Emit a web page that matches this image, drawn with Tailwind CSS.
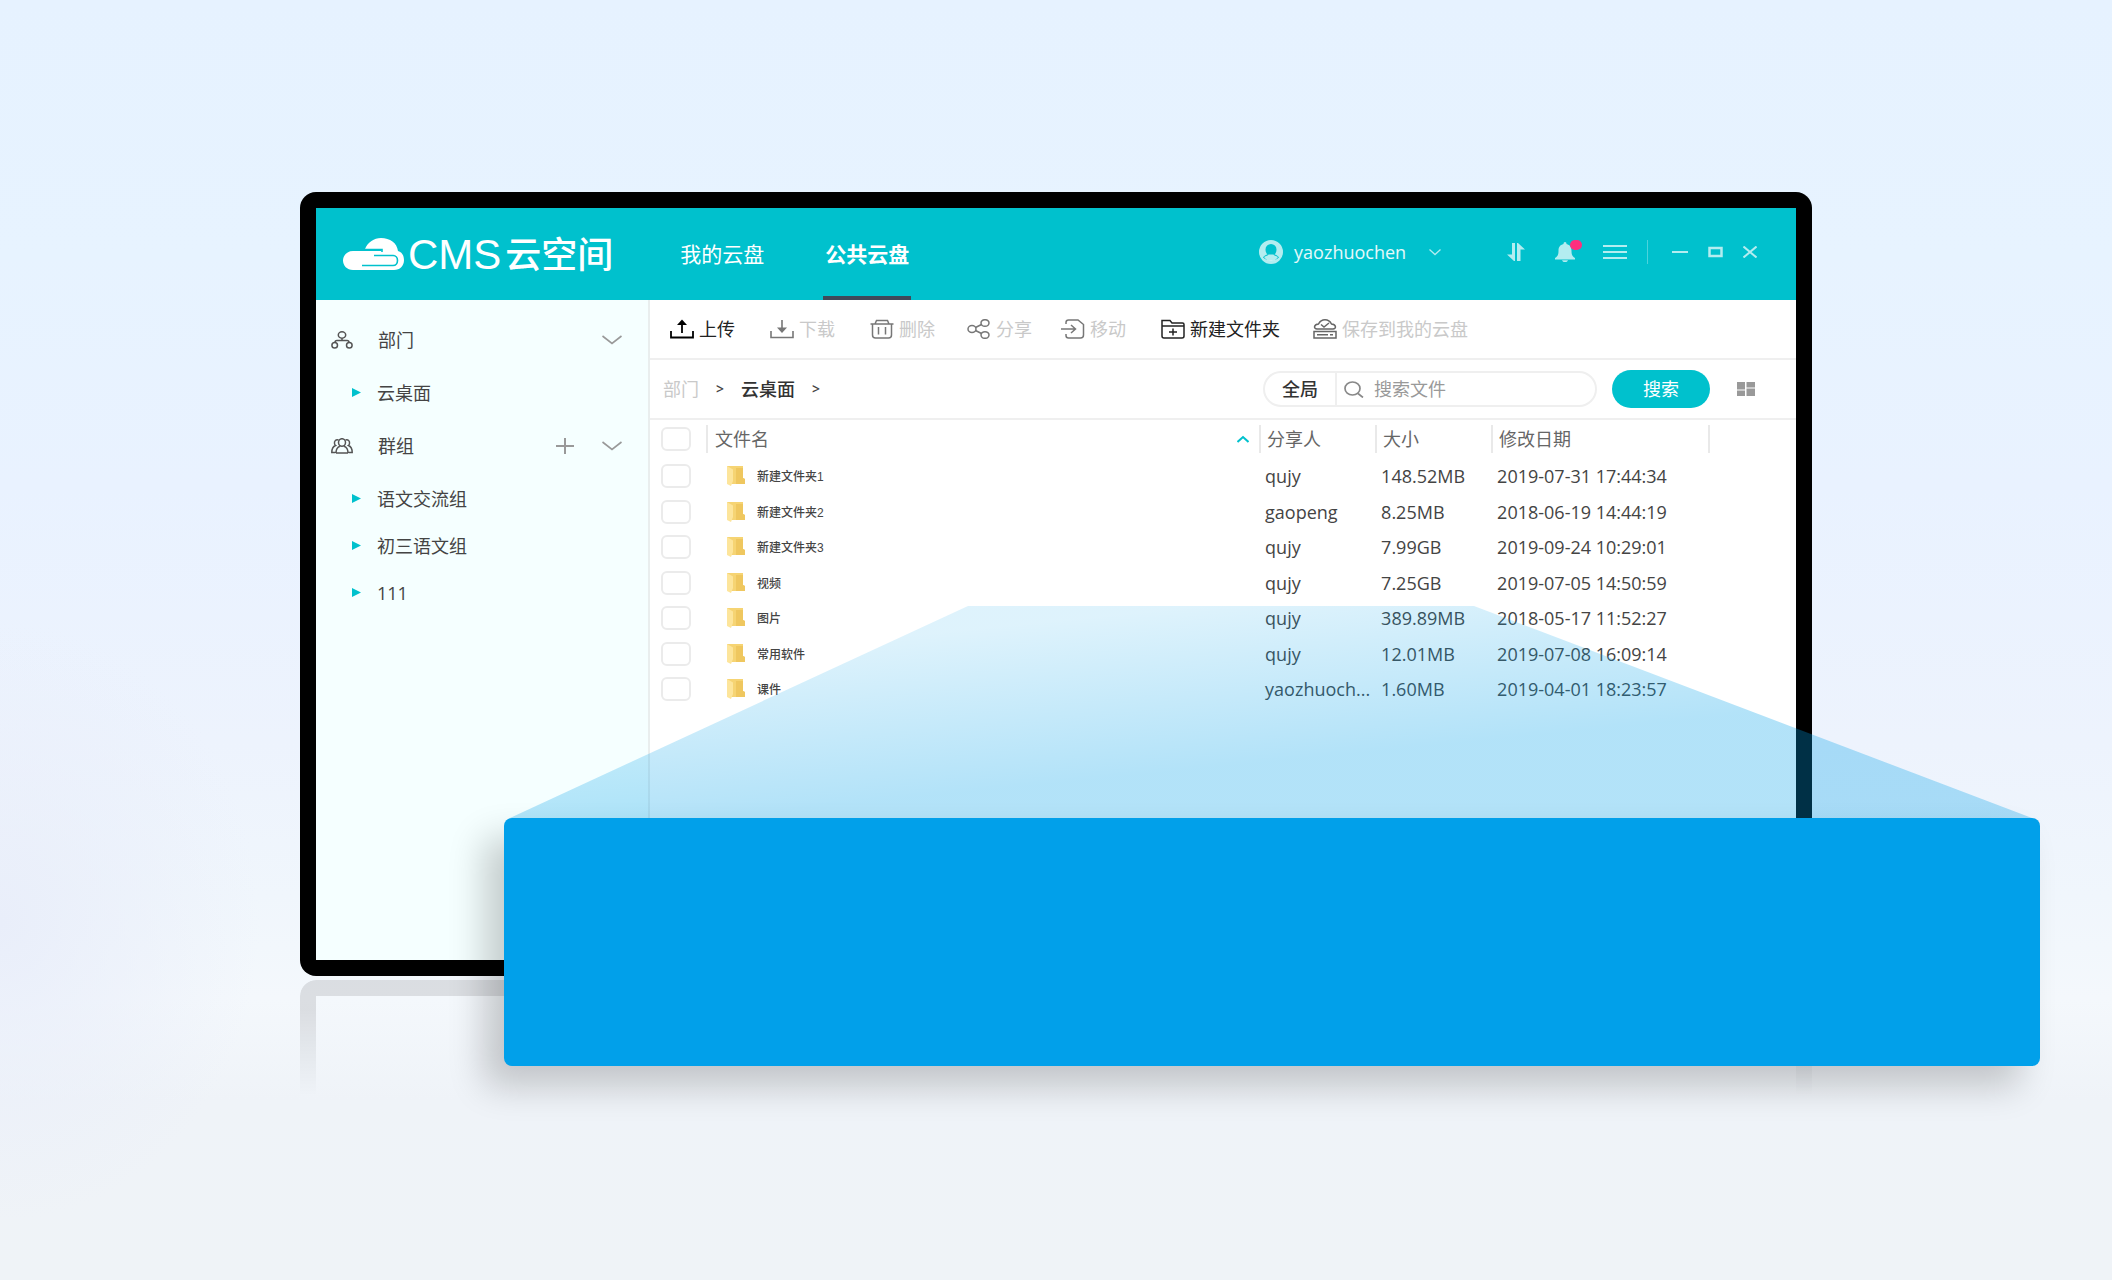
<!DOCTYPE html>
<html lang="zh-CN">
<head>
<meta charset="utf-8">
<title>CMS云空间</title>
<script src="https://cdn.jsdelivr.net/npm/@tailwindcss/browser@4"></script>
</head>
<body class="font-['Open_Sans','Noto_Sans_CJK_SC',sans-serif] text-lg leading-6 text-[#444]">
<main class="relative min-h-screen overflow-hidden bg-[radial-gradient(ellipse_260px_300px_at_0%_72%,#e9eefa_0%,#e9eefa00_100%),linear-gradient(180deg,#e6f2ff_0%,#e7f3ff_20%,#e9f2ff_38%,#edf3fd_58%,#f0f6fc_70%,#f4f8fc_78%,#eff3f8_86%,#eff3f7_100%)] pt-48">

  <!-- monitor -->
  <div class="mx-auto w-[71.6%] rounded-2xl bg-black p-4">
    <div class="flex aspect-[1480/752] flex-col bg-white">

      <header class="flex h-[92px] shrink-0 items-stretch bg-[#00c1cd] pr-[39px] pl-[27px] text-white">
        <a href="#" class="flex items-center gap-1">
          <svg class="h-8 w-[61px]" viewBox="0 0 61 32" aria-hidden="true">
            <path fill="#fff" d="M10 32C4 32 0 27.500 0 22.500S4 13 10 13H38.500V11H22C25 4 31 0 38 0C47 0 54 5 55 13C59 14 61 18 61 22C61 28 57 32 51 32Z"/>
            <path fill="none" stroke="#00c1cd" stroke-width="1.600" d="M22 11.500H39V14M31 17.500H50C56 17.500 56 27.500 50 27.500H19"/>
          </svg>
          <span class="flex items-center gap-1 pt-0.5 text-[36px] leading-10 font-medium whitespace-nowrap"><span class="font-['Liberation_Sans',sans-serif] text-[42px] font-normal">CMS</span>云空间</span>
        </a>
        <nav class="ml-[55px] flex gap-[47px] text-[21px]">
          <a href="#" class="flex items-center border-b-4 border-transparent px-3 pt-1">我的云盘</a>
          <a href="#" class="flex items-center border-b-4 border-[#3f4a5a] px-[2px] pt-1 font-bold">公共云盘</a>
        </nav>
        <div class="ml-auto flex h-[87px] items-center text-white/70">
          <button class="flex items-center gap-[11px] text-white/90">
            <svg class="size-6 text-white/70" viewBox="0 0 24 24" aria-hidden="true"><path fill="currentColor" fill-rule="evenodd" d="M12 0a12 12 0 1 0 0 24a12 12 0 0 0 0-24ZM12 4a5.500 5.500 0 0 1 5.500 5.500c0 2.500-1 4-2 5c2.500 .5 3.500 1.500 4.500 3c-2 2-5 3-8 3s-6-1-8-3c1-1.500 2-2.500 4.500-3c-1-1-2-2.500-2-5A5.500 5.500 0 0 1 12 4Z"/><path fill="currentColor" d="M5 17C7 15.500 9 16 9.500 14.500H14.500C15 16 17 15.500 19 17C17 20 14 21 12 21S7 20 5 17Z"/></svg>
            yaozhuochen
            <svg class="ml-3 h-2 w-3 text-white/70" viewBox="0 0 12 8" fill="none" stroke="currentColor" stroke-width="1.300" aria-hidden="true"><path d="M.5 1.500 6 6.500 11.500 1.500"/></svg>
          </button>
          <button class="ml-[66px]" aria-label="传输"><svg class="h-5 w-[18px]" viewBox="0 0 18 20" fill="currentColor" aria-hidden="true"><path d="M5 1H8V19H7L0 12.500H5ZM10 1H11L18 7.500H13.500V19H10Z"/></svg></button>
          <button class="relative ml-[30px]" aria-label="通知"><svg class="h-5 w-5" viewBox="0 0 20 20" fill="currentColor" aria-hidden="true"><path d="M10 0C11 0 11.500 .8 11.500 2C15 3 16.500 5 16.500 9C16.500 13 17.500 14.500 20 16V17.500H0V16C2.500 14.500 3.500 13 3.500 9C3.500 5 5 3 8.500 2C8.500 .8 9 0 10 0ZM7 18.200H13C12.500 19.500 11.500 20 10 20S7.500 19.500 7 18.200Z"/></svg><span class="absolute -top-0.5 -right-[7px] h-[10px] w-3 rounded-full bg-[#ff2f7e]"></span></button>
          <button class="ml-7" aria-label="菜单"><svg class="h-4 w-6" viewBox="0 0 24 16" stroke="currentColor" stroke-width="2" aria-hidden="true"><path d="M0 2H24M0 8H24M0 14H24"/></svg></button>
          <span class="ml-5 h-6 w-px bg-white/30"></span>
          <button class="ml-6" aria-label="最小化"><svg class="h-3 w-4" viewBox="0 0 16 12" stroke="currentColor" stroke-width="2" aria-hidden="true"><path d="M0 6H16"/></svg></button>
          <button class="ml-5" aria-label="最大化"><svg class="h-3 w-[15px]" viewBox="0 0 15 12" fill="none" stroke="currentColor" stroke-width="2.500" aria-hidden="true"><path d="M1.500 2H13.500V10H1.500Z"/></svg></button>
          <button class="ml-5" aria-label="关闭"><svg class="h-3 w-[14px]" viewBox="0 0 14 12" stroke="currentColor" stroke-width="2" aria-hidden="true"><path d="M.5 .5 13.500 11.500M13.500 .5 .5 11.500"/></svg></button>
        </div>
      </header>

      <div class="flex min-h-0 flex-1">
        <aside class="w-[334px] shrink-0 border-r-2 border-[#e9eeee] bg-[#f5ffff] pt-[13px]">
          <div class="flex h-[53px] items-center pr-[26px] pl-[15px]">
            <svg class="h-[18px] w-[22px]" viewBox="0 0 22 18" fill="none" stroke="#555" stroke-width="1.500" aria-hidden="true"><ellipse cx="11" cy="4" rx="3.700" ry="3.200"/><ellipse cx="3.700" cy="14.300" rx="2.800" ry="2.800"/><ellipse cx="18.300" cy="14.300" rx="2.800" ry="2.800"/><path d="M11 7.200V9.500M4 11.500C4 10 5 9.500 6 9.500H16C17 9.500 18 10 18 11.500"/></svg>
            <span class="ml-[25px]">部门</span>
            <button class="ml-auto" aria-label="收起部门"><svg class="h-[10px] w-5" viewBox="0 0 20 10" fill="none" stroke="#999" stroke-width="1.600" aria-hidden="true"><path d="M.5 1 10 8.500 19.500 1"/></svg></button>
          </div>
          <ul class="py-[3px]">
            <li><a href="#" class="flex h-[47px] items-center gap-4 pl-9"><svg class="h-[9px] w-[9px]" viewBox="0 0 9 9" aria-hidden="true"><path fill="#00c1cd" d="M0 0 9 4.500 0 9Z"/></svg>云桌面</a></li>
          </ul>
          <div class="flex h-[53px] items-center pr-[26px] pl-[15px]">
            <svg class="h-4 w-[22px]" viewBox="0 0 22 16" fill="none" stroke="#555" stroke-width="1.500" aria-hidden="true"><ellipse cx="11" cy="4.500" rx="3.500" ry="3.800"/><path d="M5 15C5 11 7 9 9 8.300M17 15C17 11 15 9 13 8.300M5 15H17M7.500 2C5 1 3 3 3.500 5.500C3.700 7 4.500 7.500 4.500 7.500C2 8.500 .8 11 .8 14.500H4.500M14.500 2C17 1 19 3 18.500 5.500C18.300 7 17.500 7.500 17.500 7.500C20 8.500 21.200 11 21.200 14.500H17.500"/></svg>
            <span class="ml-[25px]">群组</span>
            <button class="ml-auto" aria-label="新建群组"><svg class="h-4 w-[18px]" viewBox="0 0 18 16" stroke="#999" stroke-width="2" aria-hidden="true"><path d="M0 8H18M9 0V16"/></svg></button>
            <button class="ml-7" aria-label="收起群组"><svg class="h-[10px] w-5" viewBox="0 0 20 10" fill="none" stroke="#999" stroke-width="1.600" aria-hidden="true"><path d="M.5 1 10 8.500 19.500 1"/></svg></button>
          </div>
          <ul class="py-[3px]">
            <li><a href="#" class="flex h-[47px] items-center gap-4 pl-9"><svg class="h-[9px] w-[9px]" viewBox="0 0 9 9" aria-hidden="true"><path fill="#00c1cd" d="M0 0 9 4.500 0 9Z"/></svg>语文交流组</a></li>
            <li><a href="#" class="flex h-[47px] items-center gap-4 pl-9"><svg class="h-[9px] w-[9px]" viewBox="0 0 9 9" aria-hidden="true"><path fill="#00c1cd" d="M0 0 9 4.500 0 9Z"/></svg>初三语文组</a></li>
            <li><a href="#" class="flex h-[47px] items-center gap-4 pl-9"><svg class="h-[9px] w-[9px]" viewBox="0 0 9 9" aria-hidden="true"><path fill="#00c1cd" d="M0 0 9 4.500 0 9Z"/></svg>111</a></li>
          </ul>
        </aside>

        <section class="min-w-0 flex-1">
          <div class="flex h-[60px] items-center gap-8 border-b-2 border-[#efefef] pl-5 whitespace-nowrap text-[#c9c9c9]">
            <div class="flex gap-[35px]">
              <button class="flex items-center gap-[5px] text-[#222]"><svg class="h-5 w-6" viewBox="0 0 24 20" fill="none" stroke="#000" stroke-width="1.800" aria-hidden="true"><path d="M1 12V18.500H23V12M12 4V14"/><path fill="#000" stroke="none" d="M12 .5 17 6H7Z"/></svg>上传</button>
              <button class="flex items-center gap-[5px]"><svg class="h-5 w-6" viewBox="0 0 24 20" fill="none" stroke="#777" stroke-width="1.600" aria-hidden="true"><path d="M1 12V18.500H23V12M12 1V10"/><path fill="#777" stroke="none" d="M12 14 17 8.500H7Z"/></svg>下载</button>
              <button class="flex items-center gap-[5px]"><svg class="h-5 w-6" viewBox="0 0 24 20" fill="none" stroke="#777" stroke-width="1.500" aria-hidden="true"><path d="M.5 5H23.500M5 5 6.500 1.500H17.500L19 5M2.500 5V16C2.500 18 3.500 19 5.500 19H18.500C20.500 19 21.500 18 21.500 16V5M8.500 8V15.500M15.500 8V15.500"/></svg>删除</button>
            </div>
            <div class="flex gap-[29px]">
              <button class="flex items-center gap-[5px]"><svg class="h-5 w-6" viewBox="0 0 24 20" fill="none" stroke="#777" stroke-width="1.500" aria-hidden="true"><ellipse cx="5" cy="10" rx="4" ry="3.500"/><ellipse cx="18" cy="4" rx="4" ry="3.300"/><ellipse cx="18" cy="16" rx="4" ry="3.300"/><path d="M8.500 8.500 14.500 5.500M8.500 11.500 14.500 14.500"/></svg>分享</button>
              <button class="flex items-center gap-[5px]"><svg class="h-5 w-6" viewBox="0 0 24 20" fill="none" stroke="#777" stroke-width="1.500" aria-hidden="true"><path d="M5 5V3.500C5 2 6 1 7.500 1H17L22.500 5.500V16C22.500 18 21.500 19 19.500 19H7.500C6 19 5 18 5 16.500V15M0 10H14M10 6 14.500 10 10 14"/></svg>移动</button>
            </div>
            <div class="flex gap-[33px] pl-[3px]">
              <button class="flex items-center gap-[5px] text-[#222]"><svg class="h-5 w-6" viewBox="0 0 24 20" fill="none" stroke="#222" stroke-width="1.500" aria-hidden="true"><path d="M1 17V1.500H9L11 4H21.500C22.500 4 23 4.500 23 5.500V17C23 18.500 22 19 21 19H3C2 19 1 18.500 1 17ZM1 7H23M12 9.500V16.500M8 13H16"/></svg>新建文件夹</button>
              <button class="flex items-center gap-[5px]"><svg class="h-5 w-6" viewBox="0 0 24 20" fill="none" stroke="#666" stroke-width="1.500" aria-hidden="true"><path d="M4 10H20C23.500 10 23.500 5.500 18.500 5C17 2 14.500 .8 12 .8S7 2 5.500 5C.5 5.500 .5 10 4 10ZM8 5.500 11 8 16 4M1 12.500H23V19H1ZM4 15.800H15M17 15.800H20"/></svg>保存到我的云盘</button>
            </div>
          </div>

          <div class="flex h-[60px] items-center border-b-2 border-[#efefef] pl-[13px] whitespace-nowrap">
            <nav class="flex items-center gap-[17px]" aria-label="路径">
              <a href="#" class="text-[#c9c9c9]">部门</a><span class="text-sm font-semibold">&gt;</span>
              <a href="#" class="font-medium text-[#333]">云桌面</a><span class="text-sm font-semibold">&gt;</span>
            </nav>
            <form class="mr-[41px] ml-auto flex items-center">
              <div class="flex h-9 w-[334px] items-center rounded-full border-2 border-[#efefef]">
                <button type="button" class="h-full border-r-2 border-[#efefef] px-[17px] font-medium text-[#333]">全局</button>
                <label for="search" class="ml-[7px]"><svg class="h-[17px] w-5" viewBox="0 0 20 17" fill="none" stroke="#888" stroke-width="1.700" aria-hidden="true"><ellipse cx="8.500" cy="7.500" rx="7.500" ry="6.500"/><path d="M14 12.500 19 16.500"/></svg></label>
                <input id="search" type="text" aria-label="搜索文件" placeholder="搜索文件" class="ml-[10px] w-[200px] min-w-0 bg-transparent outline-none placeholder:text-[#999]">
              </div>
              <button type="button" class="ml-[15px] h-[38px] w-[98px] rounded-full bg-[#00c1cd] text-white">搜索</button>
              <button type="button" class="ml-[27px]" aria-label="网格视图"><svg class="h-[14px] w-[18px]" viewBox="0 0 18 14" fill="#999" aria-hidden="true"><path d="M0 0H8V7.500H0ZM9.500 0H18V5.500H9.500ZM0 8.500H8V14H0ZM9.500 6.500H18V14H9.500Z"/></svg></button>
            </form>
          </div>

          <table class="w-full table-fixed border-collapse text-left whitespace-nowrap">
            <colgroup><col class="w-14"><col><col class="w-[116px]"><col class="w-[116px]"><col class="w-[219px]"><col class="w-[86px]"></colgroup>
            <thead class="text-[#666]">
              <tr class="h-[38px]">
                <th class="p-0 pl-[11px] font-normal"><input type="checkbox" aria-label="全选" class="block h-6 w-[30px] appearance-none rounded-md border-2 border-[#ebebeb]"></th>
                <th class="p-0 font-normal"><div class="flex h-7 items-center justify-between border-l-2 border-[#e9e9e9] pr-[10px] pl-[7px]">文件名<svg class="h-2 w-3" viewBox="0 0 12 8" fill="none" stroke="#00c1cd" stroke-width="2" aria-hidden="true"><path d="M.5 7 6 2 11.500 7"/></svg></div></th>
                <th class="p-0 font-normal"><div class="flex h-7 items-center border-l-2 border-[#e9e9e9] pl-[6px]">分享人</div></th>
                <th class="p-0 font-normal"><div class="flex h-7 items-center border-l-2 border-[#e9e9e9] pl-[6px]">大小</div></th>
                <th class="p-0 font-normal"><div class="flex h-7 items-center border-x-2 border-[#e9e9e9] pl-[6px]">修改日期</div></th>
                <th class="p-0"></th>
              </tr>
            </thead>
            <tbody id="files"></tbody>
          </table>
        </section>
      </div>
    </div>
  </div>

  <!-- floor reflection of the monitor frame -->
  <div class="mx-auto mt-1 h-[116px] w-[71.6%] rounded-t-2xl border-x-16 border-t-16 border-black/10 [mask-image:linear-gradient(180deg,#000_25%,transparent_100%)]"></div>

  <!-- light beam and banner floating over the monitor -->
  <div class="pointer-events-none absolute top-[606px] left-[23.864%] w-[72.727%]">
    <svg class="block h-[212px] w-full" viewBox="0 0 1536 212" preserveAspectRatio="none" aria-hidden="true">
      <defs><linearGradient id="beam" gradientUnits="userSpaceOnUse" x1="700" y1="0" x2="716" y2="160"><stop offset="0" stop-color="#00a0e9" stop-opacity=".13"/><stop offset="1" stop-color="#00a0e9" stop-opacity=".3"/></linearGradient></defs>
      <path fill="url(#beam)" d="M464 0H970L1528 212H6Z"/>
    </svg>
    <div class="h-[248px] rounded-lg bg-[#01a0ea] shadow-[-20px_20px_36px_rgba(0,0,0,0.2)]"></div>
  </div>
</main>

<script>
  const files = [
    ["新建文件夹1", "qujy", "148.52MB", "2019-07-31 17:44:34"],
    ["新建文件夹2", "gaopeng", "8.25MB", "2018-06-19 14:44:19"],
    ["新建文件夹3", "qujy", "7.99GB", "2019-09-24 10:29:01"],
    ["视频", "qujy", "7.25GB", "2019-07-05 14:50:59"],
    ["图片", "qujy", "389.89MB", "2018-05-17 11:52:27"],
    ["常用软件", "qujy", "12.01MB", "2019-07-08 16:09:14"],
    ["课件", "yaozhuoch...", "1.60MB", "2019-04-01 18:23:57"],
  ];
  document.getElementById("files").innerHTML = files.map(([name, owner, size, date]) => `
    <tr class="h-[35px] odd:h-9">
      <td class="p-0 pl-[11px]"><input type="checkbox" aria-label="${name}" class="block h-6 w-[30px] appearance-none rounded-md border-2 border-[#ebebeb]"></td>
      <td class="p-0 pl-[21px]"><div class="flex items-center gap-3 font-['Liberation_Sans','Noto_Sans_CJK_SC',sans-serif] text-xs font-medium">
        <svg class="h-5 w-[18px]" viewBox="0 0 18 20" aria-hidden="true"><path fill="#f6d473" d="M0 0H16V12L18 13V18H0Z"/><path fill="#efc75f" d="M9 2H16V12L18 13V18H9Z"/><path fill="#fde59b" d="M0 0 6 3.500V15L4 20 0 18Z"/></svg><span class="pt-0.5">${name}</span></div></td>
      <td class="p-0 pl-[6px]">${owner}</td>
      <td class="p-0 pl-[6px]">${size}</td>
      <td class="p-0 pl-[6px]">${date}</td>
      <td class="p-0"></td>
    </tr>`).join("");
</script>
</body>
</html>
